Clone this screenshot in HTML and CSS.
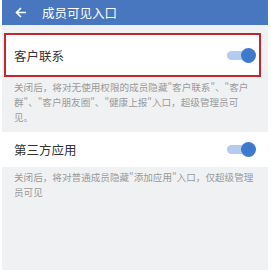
FILE: index.html
```html
<!DOCTYPE html>
<html lang="zh-CN">
<head>
    <meta charset="UTF-8">
    <meta name="viewport" content="width=device-width, initial-scale=1.0">
    <title>成员可见入口</title>
    <link rel="stylesheet" href="styles.css">
</head>
<body>
    <div class="screen">
        <div class="topbar">
            <svg class="back" width="12" height="11" viewBox="0 0 12 11">
                <path d="M11 5.5H1.5M6 1L1.5 5.5L6 10" fill="none" stroke="#fff" stroke-width="1.6"/>
            </svg>
            <span class="title">成员可见入口</span>
        </div>

        <div class="row highlight">
            <span class="label">客户联系</span>
            <span class="switch on"><span class="knob"></span></span>
        </div>
        <p class="desc">关闭后，将对无使用权限的成员隐藏"客户联系"、"客户<br>群"、"客户朋友圈"、"健康上报"入口，超级管理员可见。</p>

        <div class="row">
            <span class="label">第三方应用</span>
            <span class="switch on"><span class="knob"></span></span>
        </div>
        <p class="desc">关闭后，将对普通成员隐藏"添加应用"入口，仅超级管理员可见</p>
    </div>
</body>
</html>
```

FILE: styles.css
```css
/* Page frame */
body {
    margin: 0;
    background: #fff;
    font-family: "Noto Sans CJK SC", "Noto Sans", sans-serif;
}

.screen {
    margin: 0 3px 0 2px;
    height: 270px;
    background: #f0f1f3;
    overflow: hidden;
}

/* Top bar */
.topbar {
    height: 25px;
    background: #4877c0;
    display: flex;
    align-items: center;
    padding-left: 13px;
    color: #fff;
}

.back {
    margin-right: 15px;
}

.title {
    font-size: 12.5px;
}

/* Rows */
.row {
    background: #fff;
    height: 35px;
    display: flex;
    align-items: center;
    justify-content: space-between;
    padding: 0 13px 0 12px;
    margin-top: 3px;
}

.row.highlight {
    margin: 8px 7px 0 2px;
    height: 40px;
    border: 2px solid #c3262f;
    padding: 0 4px 0 8px;
}

.label {
    font-size: 12.5px;
    color: #333;
}

/* Switch */
.switch {
    position: relative;
    width: 24px;
    height: 9px;
    border-radius: 5px;
    background: #b5cbed;
    margin-right: 4px;
}

.knob {
    position: absolute;
    right: -5px;
    top: -3px;
    width: 15px;
    height: 15px;
    border-radius: 50%;
    background: #3f79cd;
}

/* Description */
.desc {
    margin: 0;
    padding: 3px 14px 4px 12px;
    font-size: 9.6px;
    line-height: 15px;
    color: #9a9a9a;
}
```
